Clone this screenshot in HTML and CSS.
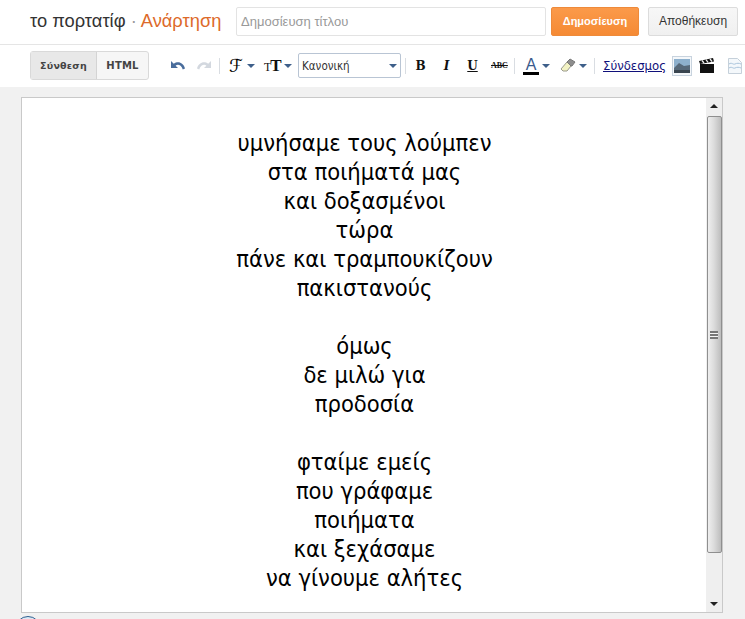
FILE: index.html
```html
<!DOCTYPE html>
<html lang="el">
<head>
    <meta charset="UTF-8">
    <title>το πορτατίφ · Ανάρτηση</title>
    <link rel="stylesheet" href="styles.css">
</head>
<body>
    <header class="top-bar">
        <h1 class="blog-title">το πορτατίφ <span class="dot">·</span> <span class="page-name">Ανάρτηση</span></h1>
        <div class="title-input">Δημοσίευση τίτλου</div>
        <button class="btn btn-publish">Δημοσίευση</button>
        <button class="btn btn-save">Αποθήκευση</button>
    </header>

    <div class="toolbar">
        <div class="mode-switch">
            <span class="mode mode-active">Σύνθεση</span>
            <span class="mode">HTML</span>
        </div>

        <svg class="icon undo" width="16" height="12" viewBox="0 0 16 12"><path d="M1 1v7h7L5.600 5.700C7.600 4 11 4.600 12.800 9.500L15 8.500C13.500 2.500 8 .5 3.800 3.700Z" fill="#4a6d9c"/></svg>
        <svg class="icon redo" width="16" height="12" viewBox="0 0 16 12"><path d="M15 1v7H8l2.400-2.300C8.400 4 5 4.600 3.200 9.500L1 8.500C2.500 2.500 8 .5 12.200 3.700Z" fill="#d3d8df"/></svg>
        <span class="sep sep-a"></span>

        <span class="glyph font-glyph">&#x2131;</span>
        <span class="caret caret-font"></span>
        <span class="glyph size-glyph"><small>T</small>T</span>
        <span class="caret"></span>

        <div class="format-select">
            <span>Κανονική</span>
            <span class="caret"></span>
        </div>
        <span class="sep sep-b"></span>

        <span class="glyph fmt bold">B</span>
        <span class="glyph fmt italic">I</span>
        <span class="glyph fmt underline">U</span>
        <span class="glyph fmt strike">ABC</span>
        <span class="sep sep-c"></span>

        <span class="text-color">A</span>
        <span class="caret caret-color"></span>
        <svg class="icon marker" width="17" height="15" viewBox="0 0 17 15">
            <path d="M1 11 7 4l4 4-4 5H3Z" fill="#f3f3c4" stroke="#9a9a8c"/>
            <path d="M7 4l3-3 5 3-3 4H11Z" fill="#8d8d8d" stroke="#777"/>
        </svg>
        <span class="caret caret-marker"></span>
        <span class="sep sep-d"></span>

        <a class="link-btn" href="#">Σύνδεσμος</a>

        <span class="photo-btn">
            <svg width="16" height="14" viewBox="0 0 16 14">
                <rect width="16" height="14" fill="#8db0cd"/>
                <path d="M0 9 5 4l5 3 6-1v8H0Z" fill="#56697a"/>
                <path d="M0 11h16v3H0Z" fill="#39454f"/>
            </svg>
        </span>
        <svg class="icon clapper" width="16" height="16" viewBox="0 0 16 16">
            <path d="M1 6h14v9H1Z" fill="#111"/>
            <path d="M0 3 14 0l1 3.500L1 6Z" fill="#111"/>
            <path d="M3 2.500 5 5M7 1.700 9 4.300M11 1 13 3.500" stroke="#eee" stroke-width="1.300"/>
        </svg>
        <svg class="icon page" width="14" height="16" viewBox="0 0 14 16">
            <path d="M.5.5h9l4 4v11H.5Z" fill="#f4f8fb" stroke="#c5d0da"/>
            <path d="M1 6c3-2 4 1 6 0s4-1 6 0M1 10c3-2 4 1 6 0s4-1 6 0" fill="none" stroke="#a9c4dc"/>
        </svg>
    </div>

    <main class="work-area">
        <div class="editor">
            <div class="poem">
                <p>υμνήσαμε τους λούμπεν<br>στα ποιήματά μας<br>και δοξασμένοι<br>τώρα<br>πάνε και τραμπουκίζουν<br>πακιστανούς</p>
                <p>όμως<br>δε μιλώ για<br>προδοσία</p>
                <p>φταίμε εμείς<br>που γράφαμε<br>ποιήματα<br>και ξεχάσαμε<br>να γίνουμε αλήτες</p>
            </div>
            <div class="scrollbar">
                <span class="arrow arrow-up"></span>
                <div class="thumb"><span class="grip"></span></div>
                <span class="arrow arrow-down"></span>
            </div>
        </div>
    </main>

    <span class="help-circle"></span>
</body>
</html>
```

FILE: styles.css
```css
* {
    box-sizing: border-box;
}

html, body {
    height: 100%;
}

body {
    margin: 0;
    width: 745px;
    height: 619px;
    overflow: hidden;
    position: relative;
    display: flex;
    flex-direction: column;
    background-color: #f1f1f1;
    font-family: 'Liberation Sans', Arial, sans-serif;
    color: #333;
}

/* Top bar */
.top-bar {
    display: flex;
    align-items: center;
    height: 45px;
    flex: none;
    padding: 5px 7px 7px 30px;
    background-color: #fff;
    border-bottom: 1px solid #e5e5e5;
}

.blog-title {
    margin: 0;
    width: 206px;
    flex: none;
    font-size: 18.300px;
    font-weight: normal;
    white-space: nowrap;
    color: #333;
}

.blog-title .dot {
    color: #999;
}

.page-name {
    color: #dd6a2a;
}

.title-input {
    width: 310px;
    height: 29px;
    flex: none;
    padding: 0 4px;
    line-height: 27px;
    font-size: 13px;
    letter-spacing: 0.01px;
    color: #999;
    background-color: #fff;
    border: 1px solid #e3e3e3;
    border-radius: 2px;
}

.btn {
    height: 29px;
    padding: 0;
    font-family: inherit;
    border-radius: 2px;
    white-space: nowrap;
}

.btn-publish {
    width: 88px;
    margin-left: 5px;
    font-size: 11px;
    font-weight: bold;
    color: #fff;
    background: linear-gradient(#fb9a4a, #f58a34);
    border: 1px solid #ee8a3a;
}

.btn-save {
    width: 90px;
    margin-left: 9px;
    font-size: 12px;
    color: #333;
    background: linear-gradient(#f7f7f7, #f0f0f0);
    border: 1px solid #dcdcdc;
}

/* Toolbar */
.toolbar {
    display: flex;
    align-items: center;
    height: 42px;
    flex: none;
    padding: 0 0 1px 30px;
    background-color: #fff;
    white-space: nowrap;
    overflow: hidden;
}

.mode-switch {
    display: flex;
    width: 119px;
    height: 29px;
    flex: none;
    border: 1px solid #d9d9d9;
    border-radius: 3px;
    background-color: #f6f6f6;
    font-size: 10px;
    font-weight: bold;
    letter-spacing: 0.2px;
    color: #444;
    font-family: 'DejaVu Sans', sans-serif;
}

.mode {
    flex: 1;
    text-align: center;
    line-height: 27px;
}

.mode-active {
    flex: none;
    width: 66px;
    background-color: #e8e8e8;
    border-right: 1px solid #d4d4d4;
    font-size: 9.500px;
}

.icon {
    flex: none;
}

.undo {
    margin-left: 21px;
}

.redo {
    margin-left: 10px;
}

.sep {
    width: 1px;
    height: 16px;
    flex: none;
    background-color: #d9dde2;
}

.sep-a {
    margin-left: 7px;
}

.sep-b {
    margin-left: 4px;
}

.sep-c {
    margin-left: 7px;
}

.sep-d {
    margin-left: 7px;
}

.glyph {
    flex: none;
    color: #111;
    font-family: 'DejaVu Serif', serif;
}

.font-glyph {
    margin-left: 8px;
    width: 16px;
    text-align: center;
    font-size: 18px;
    line-height: 18px;
    font-family: 'DejaVu Sans', sans-serif;
    color: #000;
}

.size-glyph {
    margin-left: 9px;
    width: 16px;
    font-family: 'Liberation Serif', serif;
    font-size: 17px;
    font-weight: bold;
    letter-spacing: -1px;
}

.size-glyph small {
    font-size: 12px;
    font-weight: normal;
}

.caret {
    display: inline-block;
    width: 0;
    height: 0;
    flex: none;
    margin-left: 4px;
    border-left: 4px solid transparent;
    border-right: 4px solid transparent;
    border-top: 4px solid #3e5f8a;
}

.caret-font,
.caret-color {
    margin-left: 3px;
}

.caret-marker {
    margin-left: 2px;
}

.format-select {
    display: flex;
    align-items: center;
    justify-content: space-between;
    width: 103px;
    height: 25px;
    flex: none;
    margin-left: 6px;
    padding: 0 3px 0 3px;
    font-size: 11.500px;
    font-family: 'DejaVu Sans', sans-serif;
    font-stretch: condensed;
    color: #333;
    border: 1px solid #b9c5d4;
    border-radius: 2px;
    background-color: #fff;
}

.fmt {
    width: 13px;
    margin-left: 13px;
    text-align: center;
    font-size: 12px;
    font-weight: bold;
}

.bold {
    margin-left: 8px;
}

.italic {
    font-style: italic;
}

.underline {
    text-decoration: underline;
}

.strike {
    width: 16px;
    margin-left: 12px;
    font-size: 8px;
    font-family: 'Liberation Serif', serif;
    font-weight: bold;
    text-decoration: line-through;
}

.text-color {
    flex: none;
    width: 16px;
    margin-left: 8px;
    height: 18px;
    text-align: center;
    font-size: 16px;
    line-height: 15px;
    color: #3a5a8c;
    border-bottom: 3px solid #000;
}

.marker {
    margin-left: 10px;
}

.link-btn {
    flex: none;
    margin-left: 8px;
    font-size: 13px;
    font-family: 'DejaVu Sans', sans-serif;
    font-stretch: condensed;
    color: #10107a;
}

.photo-btn {
    display: flex;
    align-items: center;
    justify-content: center;
    width: 20px;
    height: 20px;
    flex: none;
    margin-left: 6px;
    background-color: #f4f7fa;
    border: 1px solid #c8d3de;
}

.clapper {
    margin-left: 7px;
}

.page {
    margin-left: 13px;
}

/* Editor */
.work-area {
    flex: 1;
    padding: 10px 22px 6px 21px;
    background-color: #f1f1f1;
}

.editor {
    display: flex;
    height: 516px;
    background-color: #fff;
    border: 1px solid #c9c9c9;
}

.poem {
    flex: 1;
    padding-top: 31px;
    padding-left: 1px;
    text-align: center;
    font-family: 'DejaVu Sans', Verdana, sans-serif;
    font-stretch: condensed;
    font-size: 23.500px;
    line-height: 29px;
    color: #000;
}

.poem p {
    margin: 0 0 29px;
}

.scrollbar {
    position: relative;
    display: flex;
    flex-direction: column;
    align-items: center;
    width: 16px;
    flex: none;
    padding-top: 18px;
    background-color: #efefef;
}

.thumb {
    display: flex;
    align-items: center;
    justify-content: center;
    width: 15px;
    height: 437px;
    background: linear-gradient(to right, #eeeeee, #dcdcdc 45%, #bdbdbd);
    border: 1px solid #8f8f8f;
    border-radius: 2px;
}

.grip {
    width: 8px;
    height: 8px;
    border-top: 2px solid #777;
    border-bottom: 2px solid #777;
    background: linear-gradient(#f4f4f4 33%, #777 33%, #777 66%, #f4f4f4 66%);
}

.arrow {
    position: absolute;
    left: 4px;
    width: 0;
    height: 0;
    border-left: 4px solid transparent;
    border-right: 4px solid transparent;
}

.arrow-up {
    top: 6px;
    border-bottom: 4px solid #222;
}

.arrow-down {
    bottom: 6px;
    border-top: 4px solid #222;
}

.help-circle {
    position: absolute;
    left: 15px;
    top: 616px;
    width: 26px;
    height: 26px;
    border: 1.500px solid #2d5f8f;
    border-radius: 50%;
    background-color: #dce9f5;
}
```
